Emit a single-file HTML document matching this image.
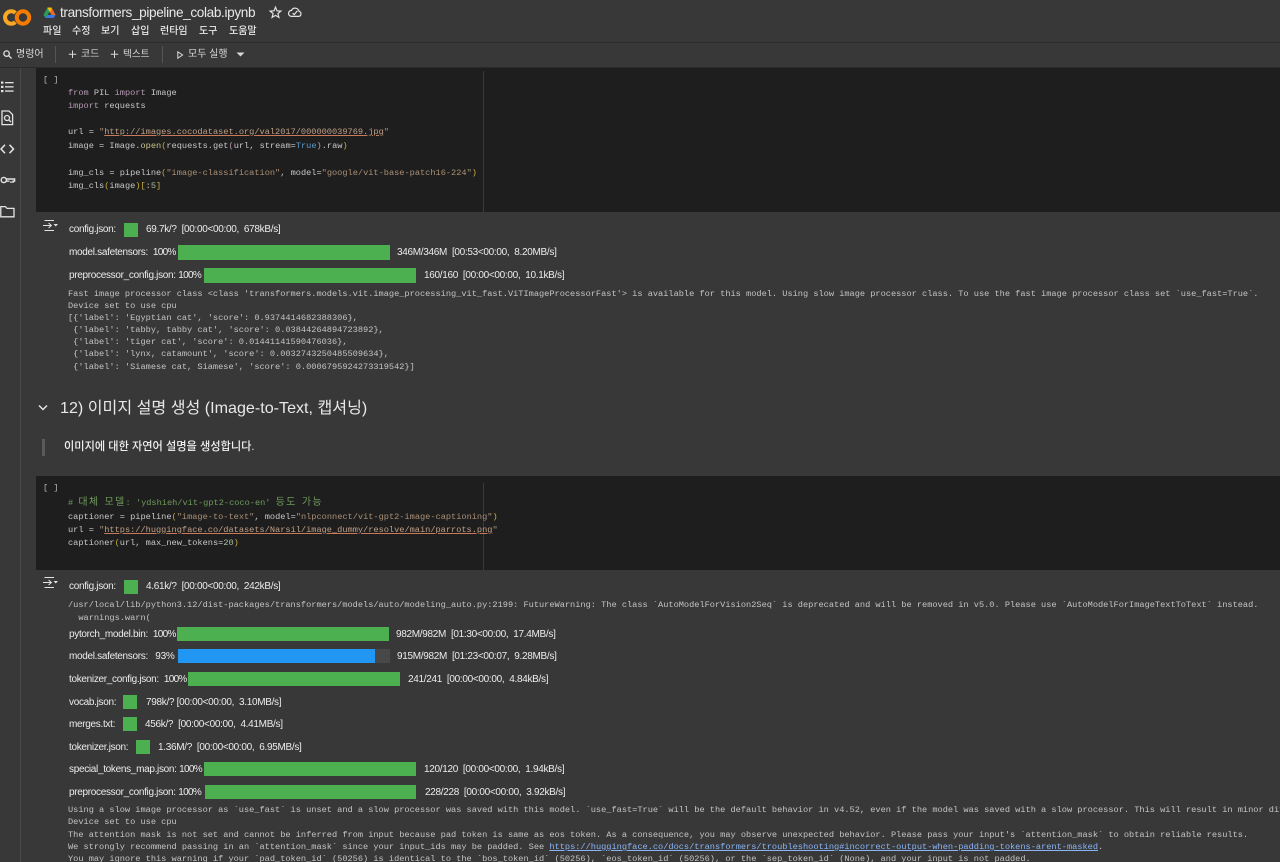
<!DOCTYPE html>
<html lang="ko"><head><meta charset="utf-8"><title>transformers_pipeline_colab.ipynb</title>
<style>
html,body{margin:0;padding:0;background:#383838;width:1280px;height:862px;overflow:hidden}
body{position:relative;font-family:"Liberation Sans","Noto Sans CJK KR",sans-serif;color:#e3e3e3}
.a{position:absolute}
.t{position:absolute;white-space:pre;line-height:14px;height:14px}
.m{font-family:"Liberation Mono","Noto Sans CJK KR",monospace;font-size:8.65px;color:#c4c4c4}
.c{color:#c8c8c8}
.s{font-size:10px;color:#ececec;letter-spacing:-.31px}
.b{position:absolute;background:#4caf50;height:14px}
.k{color:#b79ab5}.st{color:#ab9076}.f{color:#cbc58a}.p{color:#c9ad3a}.bl{color:#5a9bd0}.g{color:#6f9a5c}.n{color:#a9c0a0}
.u{text-decoration:underline;text-decoration-color:#c87a5a;text-decoration-thickness:1.4px;color:#c0a088}
.lk{color:#8ab4f8;text-decoration:underline}
.ko{font-size:10px;letter-spacing:1.3px}
.pc{letter-spacing:-.7px}
.mn{font-size:10px;color:#e8e8e8;font-weight:500}
.tb{font-size:10px;color:#d8d8d8}
svg{position:absolute;overflow:visible}
</style></head><body>

<!-- header -->
<div class="a" style="left:0;top:42px;width:1280px;height:1px;background:#2c2c2c"></div>
<div class="a" style="left:0;top:67px;width:1280px;height:1px;background:#2a2a2a"></div>

<svg style="left:0;top:0" width="36" height="36" fill="none">
<path d="M15.4 12.9A6.2 6.2 0 1 0 15.4 22.1" stroke="#f9a825" stroke-width="4"/>
<circle cx="23" cy="17.5" r="6.2" stroke="#f57c00" stroke-width="4"/>
</svg>
<svg style="left:43px;top:7px" width="13" height="12">
<path d="M4.4 .6H8.6L11 5.2 6.8 5.4Z" fill="#fbbc04"/>
<path d="M4.4 .6L.4 8 2.6 11 6.6 4.6Z" fill="#2a9d5c"/>
<path d="M2.6 11H10.6L12.6 8H4.4Z" fill="#3b78e7"/>
<path d="M8.6 .6L12.6 8H8.6L6.5 4.6Z" fill="#e8692d"/>
<path d="M4.4 .6H8.6L8.2 3.6 6.5 4.6Z" fill="#fbbc04"/>
</svg>
<div class="t" style="left:60px;top:5px;font-size:13.6px;line-height:15px;height:15px;color:#e8e8e8;letter-spacing:-.36px">transformers_pipeline_colab.ipynb</div>
<svg style="left:269px;top:6px" width="13" height="13" fill="none" stroke="#e3e3e3" stroke-width="1.2"><path d="M6.5 1.2 8 4.8 11.9 5.1 8.9 7.6 9.9 11.4 6.5 9.4 3.1 11.4 4.1 7.6 1.1 5.1 5 4.8Z"/></svg>
<svg style="left:288px;top:6px" width="14" height="12" fill="none" stroke="#e3e3e3" stroke-width="1.2"><path d="M3.6 10.4H10.6A2.6 2.6 0 0 0 11 5.3 4 4 0 0 0 3.5 4.4 3 3 0 0 0 3.6 10.4Z"/><path d="M4.6 7.2 6.2 8.6 9.4 4.8"/></svg>

<div class="t mn" style="left:43px;top:25px">파일</div>
<div class="t mn" style="left:72px;top:25px">수정</div>
<div class="t mn" style="left:101px;top:25px">보기</div>
<div class="t mn" style="left:131px;top:25px">삽입</div>
<div class="t mn" style="left:160px;top:25px">런타임</div>
<div class="t mn" style="left:199px;top:25px">도구</div>
<div class="t mn" style="left:229px;top:25px">도움말</div>

<svg style="left:3px;top:50px" width="9" height="9" fill="none" stroke="#e3e3e3" stroke-width="1.3"><circle cx="3.6" cy="3.6" r="2.7"/><path d="M5.6 5.6 8.6 8.6"/></svg>
<div class="t tb" style="left:16px;top:48px">명령어</div>
<div class="a" style="left:55px;top:46px;width:1px;height:17px;background:#555"></div>
<svg style="left:68px;top:50px" width="9" height="9" stroke="#d8d8d8" stroke-width="1"><path d="M4.5 .5V8M.8 4.3H8.2"/></svg>
<div class="t tb" style="left:81px;top:48px;letter-spacing:-.1px">코드</div>
<svg style="left:110px;top:50px" width="9" height="9" stroke="#d8d8d8" stroke-width="1"><path d="M4.5 .5V8M.8 4.3H8.2"/></svg>
<div class="t tb" style="left:123px;top:48px;font-size:9.6px">텍스트</div>
<div class="a" style="left:162px;top:46px;width:1px;height:17px;background:#555"></div>
<svg style="left:177px;top:51px" width="7" height="8" fill="none" stroke="#d8d8d8" stroke-width="1"><path d="M.8 .8 5.6 4 .8 7.2Z"/></svg>
<div class="t tb" style="left:188px;top:48px">모두 실행</div>
<svg style="left:236px;top:52px" width="9" height="5"><path d="M.5 .5H8.5L4.5 4.5Z" fill="#d8d8d8"/></svg>

<!-- sidebar -->
<div class="a" style="left:20px;top:68px;width:1px;height:794px;background:#4a4a4a"></div>
<svg style="left:0;top:80px" width="15" height="14" fill="#e3e3e3"><rect x="1" y="1.5" width="2.4" height="2.2"/><rect x="1" y="5.8" width="2.4" height="2.2"/><rect x="1" y="10" width="2.4" height="2.2"/><rect x="5" y="2" width="8.6" height="1.3"/><rect x="5" y="6.2" width="8.6" height="1.3"/><rect x="5" y="10.4" width="8.6" height="1.3"/></svg>
<svg style="left:0;top:110px" width="15" height="16" fill="none" stroke="#e3e3e3" stroke-width="1.3"><path d="M2 1H9L12.6 4.6V14.6H2Z"/><circle cx="7" cy="8" r="2.5"/><path d="M8.8 9.8 11 12"/></svg>
<svg style="left:0;top:142px" width="15" height="14" fill="none" stroke="#e3e3e3" stroke-width="1.5"><path d="M5 2.8 1 7 5 11.2M9.5 2.8 13.5 7 9.5 11.2"/></svg>
<svg style="left:0;top:174px" width="16" height="12" fill="none" stroke="#e3e3e3" stroke-width="1.4"><circle cx="3.8" cy="6" r="2.6"/><path d="M6.4 5H14.6V7.2H13V9M11 7.2V9M6.4 7.2H9.4"/></svg>
<svg style="left:0;top:205px" width="15" height="13" fill="none" stroke="#e3e3e3" stroke-width="1.3"><path d="M.8 1.6H5.4L7 3.4H14V11.8H.8Z"/></svg>

<!-- code cell 1 -->
<div class="a" style="left:36px;top:68px;width:1244px;height:144px;background:#1e1e1e"></div>
<div class="a" style="left:483px;top:71px;width:1px;height:141px;background:#3a3a3a"></div>
<div class="t m" style="left:43px;top:73px;color:#b5b5b5">[ ]</div>
<div class="t m c" style="left:68px;top:86px"><span class="k">from</span> PIL <span class="k">import</span> Image</div>
<div class="t m c" style="left:68px;top:99px"><span class="k">import</span> requests</div>
<div class="t m c" style="left:68px;top:125px">url = <span class="st">"<span class="u">http://images.cocodataset.org/val2017/000000039769.jpg</span>"</span></div>
<div class="t m c" style="left:68px;top:139px">image = Image.<span class="f">open</span><span class="p">(</span>requests.get<span class="k">(</span>url, stream=<span class="bl">True</span><span class="k">)</span>.raw<span class="p">)</span></div>
<div class="t m c" style="left:68px;top:166px">img_cls = pipeline<span class="p">(</span><span class="st">"image-classification"</span>, model=<span class="st">"google/vit-base-patch16-224"</span><span class="p">)</span></div>
<div class="t m c" style="left:68px;top:179px">img_cls<span class="p">(</span>image<span class="p">)[</span>:<span class="n">5</span><span class="p">]</span></div>

<!-- output 1 -->
<svg style="left:43px;top:219px" width="16" height="13" fill="none" stroke="#e3e3e3" stroke-width="1"><path d="M1.5 1.5H11M1.5 11.5H11M0 6.5H8M5.6 4 8.4 6.5 5.6 9"/><path d="M10.5 5H15L12.75 7.5Z" fill="#e3e3e3" stroke="none"/></svg>
<div class="t s" style="left:69px;top:223px">config.json:</div>
<div class="b" style="left:124px;top:223px;width:14px"></div>
<div class="t s" style="left:146px;top:223px">69.7k/?  [00:00&lt;00:00,  678kB/s]</div>
<div class="t s" style="left:69px;top:246px">model.safetensors:  <span class="pc">100%</span></div>
<div class="b" style="left:178px;top:245px;width:212px;height:15px"></div>
<div class="t s" style="left:397px;top:246px">346M/346M  [00:53&lt;00:00,  8.20MB/s]</div>
<div class="t s" style="left:69px;top:269px">preprocessor_config.json: <span class="pc">100%</span></div>
<div class="b" style="left:204px;top:268px;width:212px;height:15px"></div>
<div class="t s" style="left:424px;top:269px">160/160  [00:00&lt;00:00,  10.1kB/s]</div>
<div class="t m" style="left:68px;top:287px">Fast image processor class &lt;class 'transformers.models.vit.image_processing_vit_fast.ViTImageProcessorFast'&gt; is available for this model. Using slow image processor class. To use the fast image processor class set `use_fast=True`.</div>
<div class="t m" style="left:68px;top:299px">Device set to use cpu</div>
<div class="t m" style="left:68px;top:311px">[{'label': 'Egyptian cat', 'score': 0.9374414682388306},</div>
<div class="t m" style="left:68px;top:323px"> {'label': 'tabby, tabby cat', 'score': 0.03844264894723892},</div>
<div class="t m" style="left:68px;top:335px"> {'label': 'tiger cat', 'score': 0.01441141590476036},</div>
<div class="t m" style="left:68px;top:347px"> {'label': 'lynx, catamount', 'score': 0.0032743250485509634},</div>
<div class="t m" style="left:68px;top:360px"> {'label': 'Siamese cat, Siamese', 'score': 0.0006795924273319542}]</div>

<!-- heading -->
<svg style="left:38px;top:404px" width="10" height="8" fill="none" stroke="#e3e3e3" stroke-width="1.5"><path d="M1 1.5 5 5.5 9 1.5"/></svg>
<div class="t" style="left:60px;top:398px;font-size:16.1px;line-height:20px;height:20px;color:#e8e8e8">12) 이미지 설명 생성 (Image-to-Text, 캡셔닝)</div>
<div class="a" style="left:42px;top:439px;width:3px;height:17px;background:#5a5a5a"></div>
<div class="t" style="left:64px;top:440px;font-size:11.2px;color:#f0f0f0;font-weight:500">이미지에 대한 자연어 설명을 생성합니다.</div>

<!-- code cell 2 -->
<div class="a" style="left:36px;top:476px;width:1244px;height:94px;background:#1e1e1e"></div>
<div class="a" style="left:483px;top:483px;width:1px;height:87px;background:#3a3a3a"></div>
<div class="t m" style="left:43px;top:481px;color:#b5b5b5">[ ]</div>
<div class="t m g" style="left:68px;top:496px"># <span class="ko">대체</span> <span class="ko">모델</span>: 'ydshieh/vit-gpt2-coco-en' <span class="ko">등도</span> <span class="ko">가능</span></div>
<div class="t m c" style="left:68px;top:510px">captioner = pipeline<span class="p">(</span><span class="st">"image-to-text"</span>, model=<span class="st">"nlpconnect/vit-gpt2-image-captioning"</span><span class="p">)</span></div>
<div class="t m c" style="left:68px;top:523px">url = <span class="st">"<span class="u">https://huggingface.co/datasets/Narsil/image_dummy/resolve/main/parrots.png</span>"</span></div>
<div class="t m c" style="left:68px;top:536px">captioner<span class="p">(</span>url, max_new_tokens=<span class="n">20</span><span class="p">)</span></div>

<!-- output 2 -->
<svg style="left:43px;top:576px" width="16" height="13" fill="none" stroke="#e3e3e3" stroke-width="1"><path d="M1.5 1.5H11M1.5 11.5H11M0 6.5H8M5.6 4 8.4 6.5 5.6 9"/><path d="M10.5 5H15L12.75 7.5Z" fill="#e3e3e3" stroke="none"/></svg>
<div class="t s" style="left:69px;top:580px">config.json:</div>
<div class="b" style="left:124px;top:580px;width:14px"></div>
<div class="t s" style="left:146px;top:580px">4.61k/?  [00:00&lt;00:00,  242kB/s]</div>
<div class="t m" style="left:68px;top:598px">/usr/local/lib/python3.12/dist-packages/transformers/models/auto/modeling_auto.py:2199: FutureWarning: The class `AutoModelForVision2Seq` is deprecated and will be removed in v5.0. Please use `AutoModelForImageTextToText` instead.</div>
<div class="t m" style="left:68px;top:611px">  warnings.warn(</div>

<div class="t s" style="left:69px;top:628px">pytorch_model.bin:  <span class="pc">100%</span></div>
<div class="b" style="left:177px;top:627px;width:212px"></div>
<div class="t s" style="left:396px;top:628px">982M/982M  [01:30&lt;00:00,  17.4MB/s]</div>

<div class="t s" style="left:69px;top:650px">model.safetensors:   93%</div>
<div class="b" style="left:178px;top:649px;width:212px;background:#484848"></div>
<div class="b" style="left:178px;top:649px;width:197px;background:#2196f3"></div>
<div class="t s" style="left:397px;top:650px">915M/982M  [01:23&lt;00:07,  9.28MB/s]</div>

<div class="t s" style="left:69px;top:673px">tokenizer_config.json:  <span class="pc">100%</span></div>
<div class="b" style="left:188px;top:672px;width:212px"></div>
<div class="t s" style="left:408px;top:673px">241/241  [00:00&lt;00:00,  4.84kB/s]</div>

<div class="t s" style="left:69px;top:696px">vocab.json:</div>
<div class="b" style="left:123px;top:695px;width:14px"></div>
<div class="t s" style="left:146px;top:696px">798k/? [00:00&lt;00:00,  3.10MB/s]</div>

<div class="t s" style="left:69px;top:718px">merges.txt:</div>
<div class="b" style="left:123px;top:717px;width:14px"></div>
<div class="t s" style="left:145px;top:718px">456k/?  [00:00&lt;00:00,  4.41MB/s]</div>

<div class="t s" style="left:69px;top:741px">tokenizer.json:</div>
<div class="b" style="left:136px;top:740px;width:14px"></div>
<div class="t s" style="left:158px;top:741px">1.36M/?  [00:00&lt;00:00,  6.95MB/s]</div>

<div class="t s" style="left:69px;top:763px">special_tokens_map.json: <span class="pc">100%</span></div>
<div class="b" style="left:204px;top:762px;width:212px"></div>
<div class="t s" style="left:424px;top:763px">120/120  [00:00&lt;00:00,  1.94kB/s]</div>

<div class="t s" style="left:69px;top:786px">preprocessor_config.json: <span class="pc">100%</span></div>
<div class="b" style="left:205px;top:785px;width:211px"></div>
<div class="t s" style="left:425px;top:786px">228/228  [00:00&lt;00:00,  3.92kB/s]</div>

<div class="t m" style="left:68px;top:803px">Using a slow image processor as `use_fast` is unset and a slow processor was saved with this model. `use_fast=True` will be the default behavior in v4.52, even if the model was saved with a slow processor. This will result in minor differences.</div>
<div class="t m" style="left:68px;top:815px">Device set to use cpu</div>
<div class="t m" style="left:68px;top:828px">The attention mask is not set and cannot be inferred from input because pad token is same as eos token. As a consequence, you may observe unexpected behavior. Please pass your input's `attention_mask` to obtain reliable results.</div>
<div class="t m" style="left:68px;top:840px">We strongly recommend passing in an `attention_mask` since your input_ids may be padded. See <span class="lk">https://huggingface.co/docs/transformers/troubleshooting#incorrect-output-when-padding-tokens-arent-masked</span>.</div>
<div class="t m" style="left:68px;top:852px">You may ignore this warning if your `pad_token_id` (50256) is identical to the `bos_token_id` (50256), `eos_token_id` (50256), or the `sep_token_id` (None), and your input is not padded.</div>
</body></html>
